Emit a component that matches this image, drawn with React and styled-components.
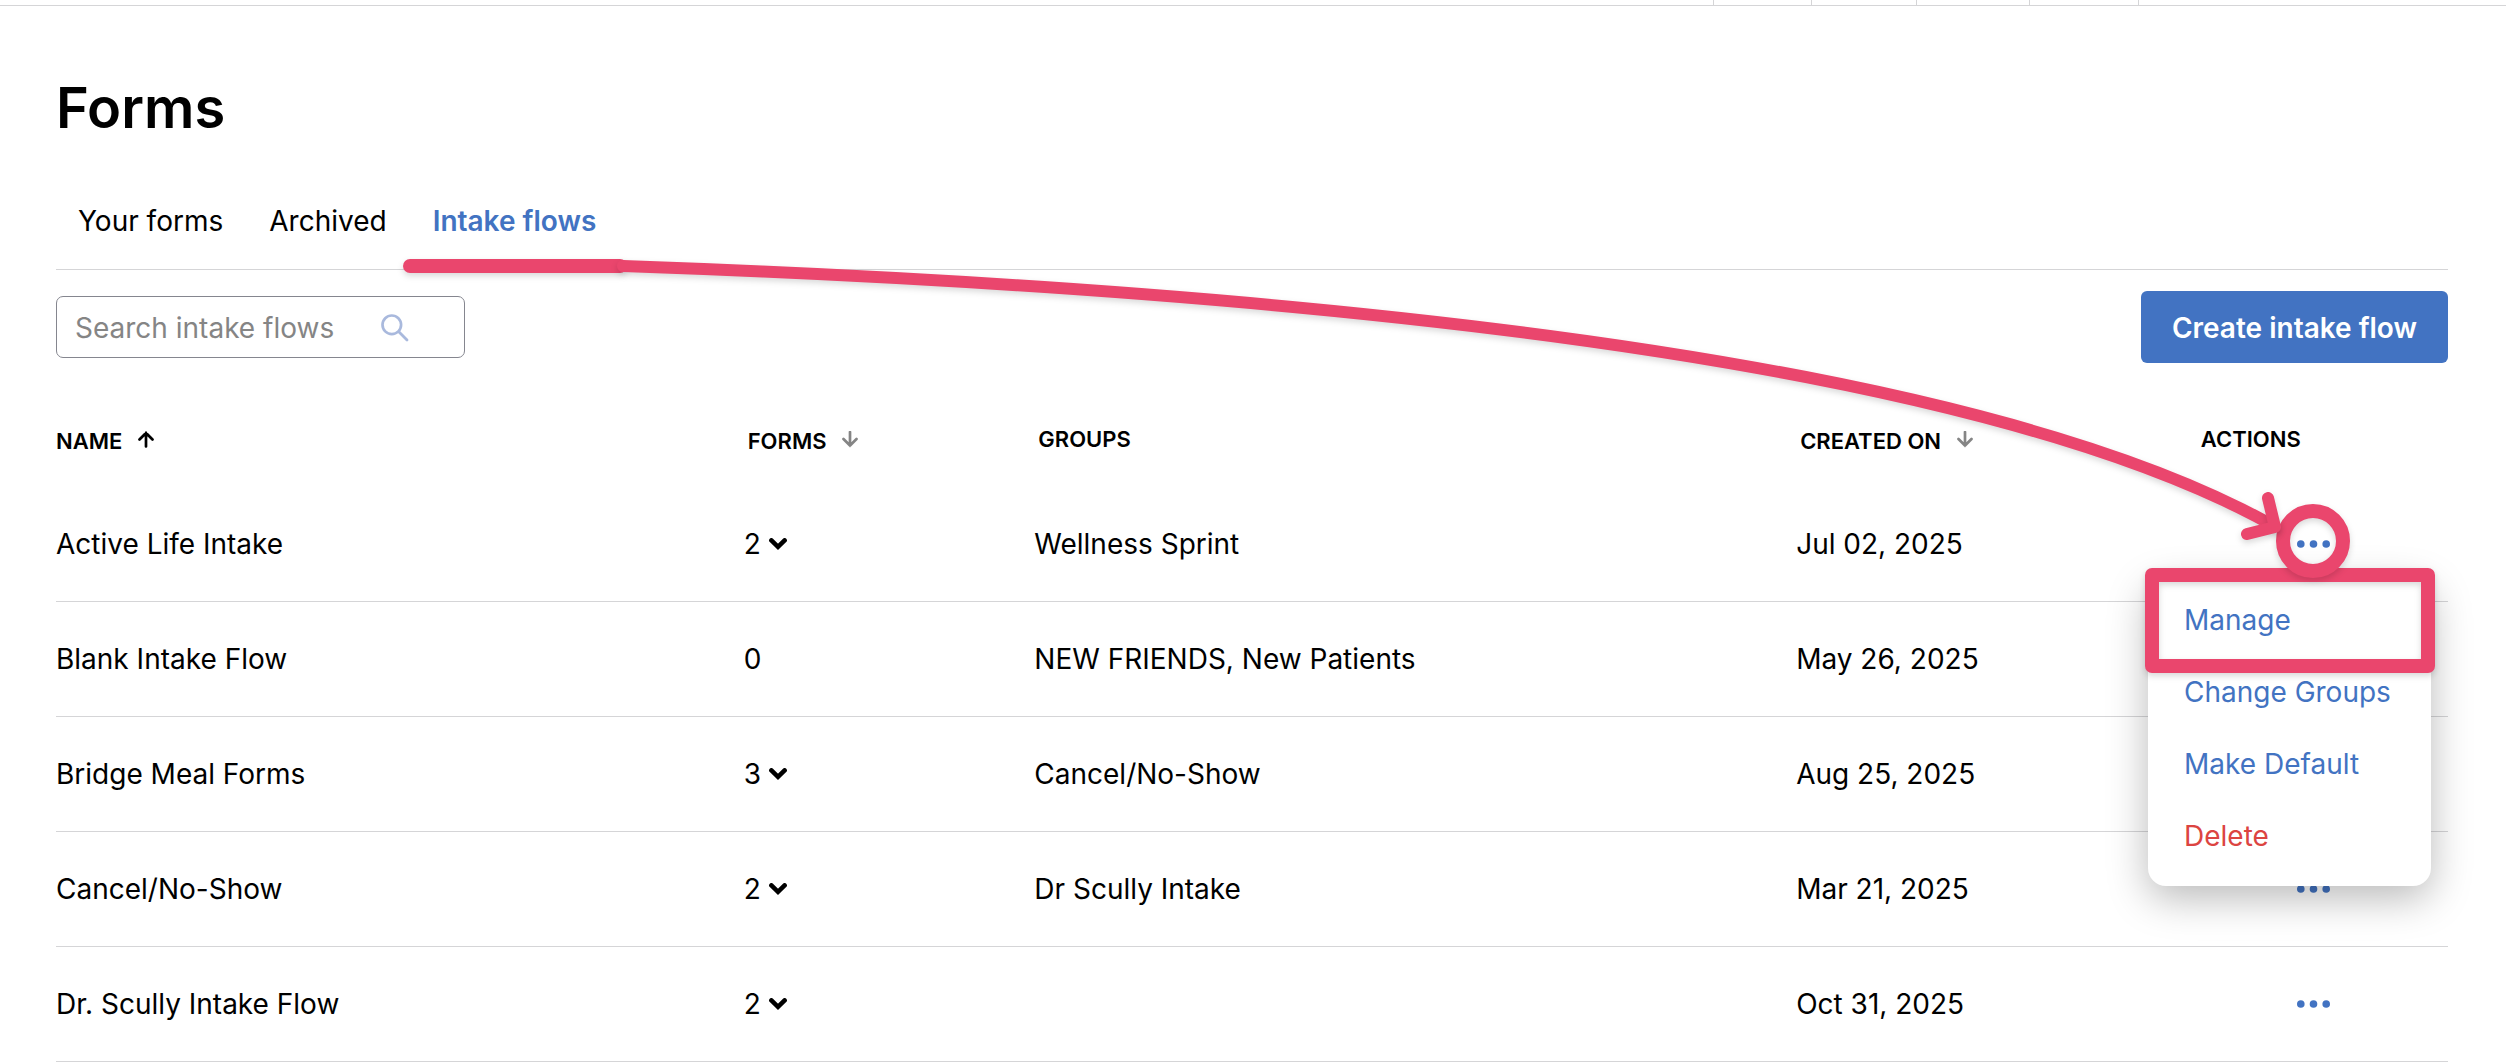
import React, { useState } from "react";
import styled, { createGlobalStyle } from "styled-components";

const TABS = ["Your forms", "Archived", "Intake flows"];

const FLOWS = [
  { name: "Active Life Intake", forms: 2, groups: "Wellness Sprint", created: "Jul 02, 2025" },
  { name: "Blank Intake Flow", forms: 0, groups: "NEW FRIENDS, New Patients", created: "May 26, 2025" },
  { name: "Bridge Meal Forms", forms: 3, groups: "Cancel/No-Show", created: "Aug 25, 2025" },
  { name: "Cancel/No-Show", forms: 2, groups: "Dr Scully Intake", created: "Mar 21, 2025" },
  { name: "Dr. Scully Intake Flow", forms: 2, groups: "", created: "Oct 31, 2025" },
];

const SortArrow = ({ up, active }) => (
  <svg width="16" height="20" viewBox="0 0 16 20" fill="none" aria-hidden="true">
    <path
      d={up ? "M8 15.5V2M1.5 8.5L8 2l6.5 6.5" : "M8 1v13.5M1.5 8L8 14.5L14.5 8"}
      stroke={active ? "#000" : "#858585"}
      strokeWidth="2.7"
      strokeLinecap="round"
    />
  </svg>
);

const Chevron = () => (
  <svg width="18" height="12" viewBox="0 0 18 12" fill="none" aria-hidden="true">
    <path d="M2.4 2.4L9 8.8l6.6-6.4" stroke="#000" strokeWidth="4.6" strokeLinecap="round" />
  </svg>
);

const SearchIcon = () => (
  <svg width="28" height="28" viewBox="0 0 28 28" fill="none" aria-hidden="true">
    <circle cx="10.8" cy="10.8" r="9.3" stroke="#a9b9dd" strokeWidth="2.7" />
    <path d="M17.8 17.8l8.2 8.2" stroke="#a9b9dd" strokeWidth="2.8" strokeLinecap="round" />
  </svg>
);

const Dots = () => (
  <svg width="33" height="8" viewBox="0 0 33 8" fill="#4273c2" aria-hidden="true">
    <circle cx="3.8" cy="4" r="3.8" />
    <circle cx="16.5" cy="4" r="3.8" />
    <circle cx="29.2" cy="4" r="3.8" />
  </svg>
);

const ActionsMenu = () => (
  <Menu>
    <MenuItem type="button">Manage</MenuItem>
    <MenuItem type="button">Change Groups</MenuItem>
    <MenuItem type="button">Make Default</MenuItem>
    <MenuItem type="button" $danger>
      Delete
    </MenuItem>
  </Menu>
);

// walkthrough marks drawn over the page
const Walkthrough = () => (
  <Marks viewBox="0 0 2506 1062" fill="none" stroke="#ea466d" aria-hidden="true">
    <rect x="2152" y="575" width="276" height="91" strokeWidth="14" strokeLinejoin="round" />
    <circle cx="2313" cy="541" r="30" strokeWidth="14" />
    <path d="M410 266H620" strokeWidth="14" strokeLinecap="round" />
    <path d="M623 266Q1888 310 2274 526" strokeWidth="12" strokeLinecap="round" />
    <path d="M2268 498l7 29-28 7" strokeWidth="12" strokeLinecap="round" strokeLinejoin="round" />
  </Marks>
);

const App = () => {
  const [tab, setTab] = useState("Intake flows");
  const [search, setSearch] = useState("");
  const [openMenu, setOpenMenu] = useState(0);

  return (
    <>
      <GlobalStyle />
      <TopBar>
        <TopCell $width={98} />
        <TopCell $width={105} />
        <TopCell $width={113} />
        <TopCell $width={109} />
        <TopCell $width={368} />
      </TopBar>
      <Page>
        <Title>Forms</Title>
        <Tabs>
          {TABS.map((item) => (
            <Tab key={item} type="button" $active={item === tab} onClick={() => setTab(item)}>
              {item}
            </Tab>
          ))}
        </Tabs>
        <Toolbar>
          <SearchBox>
            <input
              type="text"
              aria-label="Search intake flows"
              placeholder="Search intake flows"
              value={search}
              onChange={(e) => setSearch(e.target.value)}
            />
            <SearchIcon />
          </SearchBox>
          <CreateButton type="button">Create intake flow</CreateButton>
        </Toolbar>
        <Table>
          <colgroup>
            <Col $width={28.75} />
            <Col $width={12.15} />
            <Col $width={31.85} />
            <Col $width={16.75} />
            <Col />
          </colgroup>
          <thead>
            <tr>
              <HeadCell>
                <SortLabel>
                  NAME <SortArrow up active />
                </SortLabel>
              </HeadCell>
              <HeadCell $inset>
                <SortLabel>
                  FORMS <SortArrow />
                </SortLabel>
              </HeadCell>
              <HeadCell $inset>GROUPS</HeadCell>
              <HeadCell $inset>
                <SortLabel>
                  CREATED ON <SortArrow />
                </SortLabel>
              </HeadCell>
              <HeadCell $inset>ACTIONS</HeadCell>
            </tr>
          </thead>
          <tbody>
            {FLOWS.map((flow, index) => (
              <tr key={flow.name}>
                <Cell>{flow.name}</Cell>
                <Cell>
                  <FormsCount>
                    {flow.forms}
                    {flow.forms > 0 && <Chevron />}
                  </FormsCount>
                </Cell>
                <Cell>{flow.groups}</Cell>
                <Cell>{flow.created}</Cell>
                <Cell>
                  <ActionsWrap>
                    <MoreButton
                      type="button"
                      aria-label={`Actions for ${flow.name}`}
                      onClick={() => setOpenMenu(openMenu === index ? null : index)}
                    >
                      <Dots />
                    </MoreButton>
                    {openMenu === index && <ActionsMenu />}
                  </ActionsWrap>
                </Cell>
              </tr>
            ))}
          </tbody>
        </Table>
      </Page>
      <Walkthrough />
    </>
  );
};

const GlobalStyle = createGlobalStyle`
  * {
    box-sizing: border-box;
  }
  body {
    margin: 0;
    background: #fff;
    color: #000;
    font-family: Inter, "Liberation Sans", sans-serif;
    font-size: 28px;
    line-height: 36px;
  }
  button,
  input {
    font: inherit;
  }
  button {
    border: none;
    background: none;
    padding: 0;
    cursor: pointer;
  }
`;

const TopBar = styled.div`
  display: flex;
  justify-content: flex-end;
  height: 6px;
  border-bottom: 1px solid #d5d5d7;
`;

const TopCell = styled.div`
  width: ${({ $width }) => $width}px;
  border-left: 1px solid #d5d5d7;
`;

const Page = styled.main`
  padding: 66px 58px 0 56px;
`;

const Title = styled.h1`
  margin: 0;
  font-size: 56px;
  line-height: 72px;
  font-weight: 600;
`;

const Tabs = styled.div`
  display: flex;
  gap: 46px;
  margin-top: 40px;
  padding: 19px 22px 30px;
  border-bottom: 1px solid #d5d5d7;
`;

const Tab = styled.button`
  color: ${({ $active }) => ($active ? "#4273c2" : "#000")};
  font-weight: ${({ $active }) => ($active ? 600 : 400)};
`;

const Toolbar = styled.div`
  display: flex;
  justify-content: space-between;
  align-items: center;
  margin-top: 21px;
`;

const SearchBox = styled.div`
  display: flex;
  align-items: center;
  width: 409px;
  height: 62px;
  padding: 2px 55px 0 18px;
  border: 1px solid #85868f;
  border-radius: 7px;
  input {
    flex: 1;
    min-width: 0;
    padding: 0;
    border: none;
    outline: none;
    background: none;
    &::placeholder {
      color: #858585;
      opacity: 1;
    }
  }
`;

const CreateButton = styled.button`
  height: 72px;
  padding: 2px 31px 0;
  border-radius: 6px;
  background: #4273c2;
  color: #fff;
  font-weight: 600;
`;

const Table = styled.table`
  width: 100%;
  margin-top: 60px;
  table-layout: fixed;
  border-collapse: separate;
  border-spacing: 0;
`;

const Col = styled.col`
  width: ${({ $width }) => ($width ? `${$width}%` : "auto")};
`;

const HeadCell = styled.th`
  height: 64px;
  padding: 0 0 0 ${({ $inset }) => ($inset ? 4 : 0)}px;
  font-size: 22px;
  line-height: 32px;
  font-weight: 600;
  text-align: left;
  vertical-align: top;
`;

const SortLabel = styled.span`
  display: flex;
  align-items: center;
  gap: 16px;
  padding-top: 2px;
`;

const Cell = styled.td`
  height: 115px;
  padding: 0;
  border-bottom: 1px solid #d5d5d7;
`;

const FormsCount = styled.span`
  display: flex;
  align-items: center;
  gap: 8px;
`;

const ActionsWrap = styled.div`
  position: relative;
  display: flex;
`;

const MoreButton = styled.button`
  display: flex;
  align-items: center;
  height: 36px;
  margin-left: 100px;
`;

const Menu = styled.div`
  position: absolute;
  top: 50px;
  right: 17px;
  z-index: 1;
  display: flex;
  flex-direction: column;
  width: 283px;
  padding: 8px 0 14px;
  border-radius: 18px;
  background: #fff;
  box-shadow: 0 12px 40px rgba(0, 0, 0, 0.28);
`;

const MenuItem = styled.button`
  padding: 18px 36px;
  color: ${({ $danger }) => ($danger ? "#dc4441" : "#4273c2")};
  text-align: left;
`;

const Marks = styled.svg`
  position: absolute;
  top: 0;
  left: 0;
  z-index: 2;
  width: 100%;
  pointer-events: none;
  path,
  rect,
  circle {
    filter: drop-shadow(0 3px 3px rgba(0, 0, 0, 0.15));
  }
`;

export default App;
